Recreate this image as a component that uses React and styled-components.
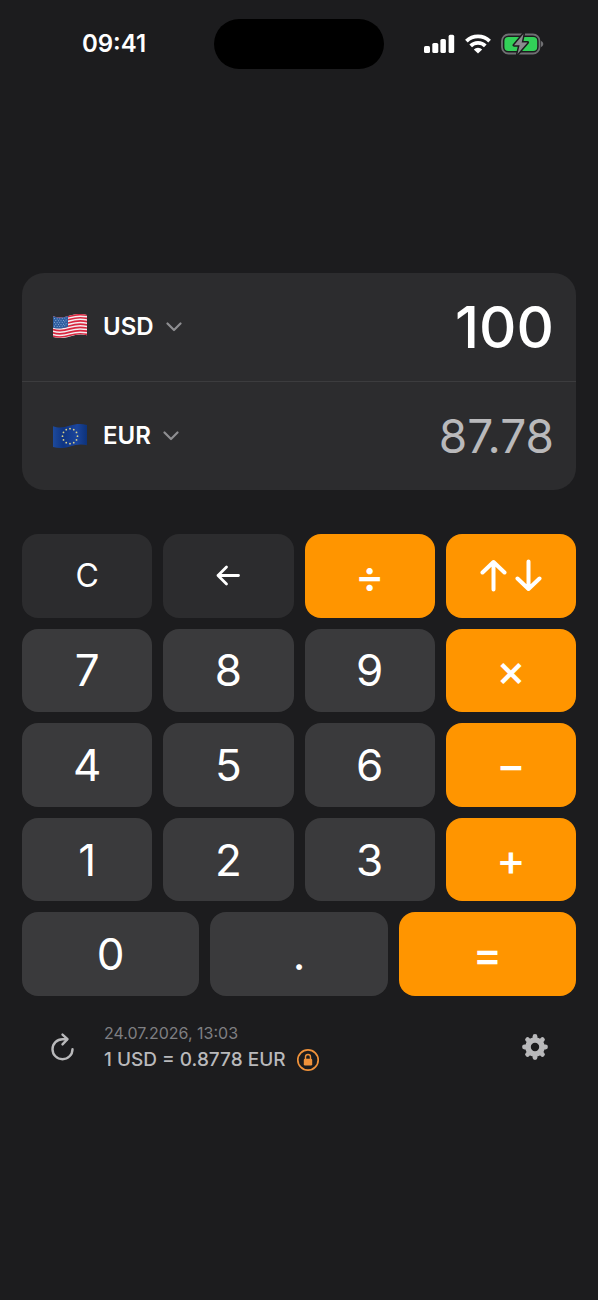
import React, { useState } from 'react';
import styled, { createGlobalStyle } from 'styled-components';

const fondo = '#1c1c1e';
const panel = '#2c2c2e';
const tecla = '#3a3a3c';
const naranja = '#ff9500';

const GlobalStyle = createGlobalStyle`
    * {
        box-sizing: border-box;
    }
    body {
        margin: 0;
        background: ${fondo};
        color: #fff;
        font-family: Inter, "Liberation Sans", sans-serif;
    }
    button, input, select {
        margin: 0;
        padding: 0;
        border: 0;
        background: none;
        color: inherit;
        font: inherit;
    }
    button {
        cursor: pointer;
    }
`

const Screen = styled.div`
    min-height: 100vh;
    background: ${fondo};
`

const StatusBar = styled.header`
    display: grid;
    grid-template-columns: 1fr 170px 1fr;
    align-items: center;
    height: 88px;
`

const Clock = styled.time`
    justify-self: center;
    padding-left: 14px;
    font-size: 24px;
    line-height: 28px;
    font-weight: 600;
`

const Island = styled.div`
    height: 50px;
    border-radius: 25px;
    background: #000;
`

const StatusIcons = styled.div`
    display: flex;
    align-items: center;
    justify-self: center;
    gap: 10px;
    padding-right: 14px;
`

const Main = styled.main`
    padding: 185px 22px 0;
`

const Card = styled.section`
    border-radius: 22px;
    background: ${panel};
`

const CurrencyRow = styled.div`
    display: flex;
    align-items: center;
    justify-content: space-between;
    height: 108px;
    padding: 0 22px 0 30px;

    & + & {
        height: 109px;
        border-top: 1px solid #3c3c3e;
    }
`

const Picker = styled.label`
    display: flex;
    align-items: center;
`

const CurrencySelect = styled.select`
    appearance: none;
    field-sizing: content;
    margin-left: 15px;
    padding-right: 30px;
    font-size: 24px;
    line-height: 32px;
    font-weight: 600;
    cursor: pointer;
    outline: none;
`

const ChevronIcon = styled.svg`
    margin-left: -18px;
    pointer-events: none;
`

const AmountInput = styled.input`
    flex: 1;
    min-width: 0;
    text-align: right;
    font-size: 58px;
    line-height: 70px;
    font-weight: 500;
    outline: none;
`

const Result = styled.output`
    font-size: 46px;
    line-height: 56px;
    font-weight: 400;
    color: #b9b9bb;
`

const Keypad = styled.div`
    display: grid;
    grid-template-columns: repeat(12, 1fr);
    grid-auto-rows: 1fr;
    gap: 11px;
    height: 462px;
    margin-top: 44px;
`

const Key = styled.button`
    display: flex;
    align-items: center;
    justify-content: center;
    grid-column: span ${({ $span }) => $span || 3};
    border-radius: 16px;
    background: ${tecla};
    font-size: 44px;
    line-height: 52px;
    font-weight: 400;
`

const FunctionKey = styled(Key)`
    background: ${panel};
    font-size: 32px;
`

const OperatorKey = styled(Key)`
    background: ${naranja};
    font-weight: 500;
`

const Footer = styled.footer`
    display: flex;
    align-items: center;
    padding: 24px 28px 0 29px;
`

const IconButton = styled.button`
    display: flex;
`

const RateInfo = styled.div`
    flex: 1;
    margin-left: 29px;
`

const RateDate = styled.time`
    display: block;
    font-size: 16px;
    line-height: 26px;
    color: #7f7f82;
`

const RateLine = styled.div`
    display: flex;
    align-items: center;
    gap: 10px;
    font-size: 19px;
    line-height: 28px;
    font-weight: 500;
    color: #b9b9bb;
`

const SignalIcon = () => (
    <svg width="31" height="20" viewBox="0 0 31 20" fill="#fff" aria-hidden="true">
        <rect x="0" y="12" width="6" height="7" rx="1.6" />
        <rect x="8.3" y="9" width="6" height="10" rx="1.6" />
        <rect x="16.4" y="5" width="5.5" height="14" rx="1.6" />
        <rect x="24.6" y="0.8" width="5.6" height="18.2" rx="1.6" />
    </svg>
)

const WifiIcon = () => (
    <svg width="26" height="20" viewBox="0 0 26 20" aria-hidden="true">
        <g fill="none" stroke="#fff" strokeWidth="3.8">
            <path d="M1.4 7.2a16.6 16.6 0 0 1 23.2 0" />
            <path d="M5.7 11.8a10.4 10.4 0 0 1 14.6 0" />
        </g>
        <path d="M13 19.6l-4.2-4.200a5.900 5.900 0 0 1 8.400 0z" fill="#fff" />
    </svg>
)

const BatteryIcon = () => (
    <svg width="43" height="22" viewBox="0 0 43 22" aria-hidden="true">
        <rect x="1" y="1.5" width="37.5" height="19" rx="6.5" fill="none" stroke="#6f6f72" strokeWidth="1.8" />
        <path d="M40 8c3 .8 3 5.2 0 6z" fill="#6f6f72" />
        <rect x="3.4" y="4" width="32.8" height="14" rx="4" fill="#32d158" />
        <path d="M22.5 1L13 12.2h5.6L16.500 21l10-11.600h-5.800z" fill="#8b8b8f" stroke="#1c1c1e" strokeWidth="3" paintOrder="stroke" strokeLinejoin="round" />
    </svg>
)

const Chevron = () => (
    <ChevronIcon width="16" height="10" viewBox="0 0 16 10" fill="none" stroke="#8e8e91" strokeWidth="2.2" strokeLinecap="round" strokeLinejoin="round" aria-hidden="true">
        <path d="M1.5 1.5L8 8l6.500-6.500" />
    </ChevronIcon>
)

const stripes = [0, 1, 2, 3, 4, 5, 6]
const starRows = [0, 1, 2, 3, 4]

const UsFlag = () => (
    <svg width="36" height="26" viewBox="0 1 36 26" aria-hidden="true">
        <clipPath id="us-shape">
            <path d="M1 3.2C7 5.5 12 4.500 18 2.600S29 .4 35 2v20.300c-6-1.600-11-.6-17 1.100s-11 2.300-17 .5z" />
        </clipPath>
        <g clipPath="url(#us-shape)">
            <rect width="36" height="26" fill="#f3eef0" />
            <g fill="none" stroke="#d8273f" strokeWidth="1.7">
                {stripes.map((i) => (
                    <path key={i} d={`M0 ${3.5 + i * 3.2}c7 2.5 12 1.5 18-.4s11-2.2 18-.7`} />
                ))}
            </g>
            <path d="M0 2.5c6 2.6 11 2 16-.1v11.400c-5 1.800-10 2.600-16 .6z" fill="#2d5d9f" />
            <g fill="none" stroke="#a9c3e6" strokeWidth="0.8" strokeDasharray="0.9 1.7">
                {starRows.map((i) => (
                    <path key={i} d={`M${i % 2 ? 3.3 : 2} ${5.5 + i * 1.9}c5 .9 9 .3 13-1.2`} />
                ))}
            </g>
        </g>
    </svg>
)

const EuFlag = () => (
    <svg width="36" height="26" viewBox="0 0 36 26" aria-hidden="true">
        <defs>
            <linearGradient id="eu-blue">
                <stop offset="0" stopColor="#1d4a9c" />
                <stop offset="0.3" stopColor="#0f3583" />
                <stop offset="0.7" stopColor="#1b459c" />
                <stop offset="1" stopColor="#0d3279" />
            </linearGradient>
        </defs>
        <path d="M1 3.2C7 5.5 12 4.500 18 2.600S29 .4 35 2v20.300c-6-1.600-11-.6-17 1.100s-11 2.300-17 .5z" fill="url(#eu-blue)" />
        <g fill="#d8cf8a">
            {Array.from({ length: 12 }, (_, i) => (
                <circle key={i} cx={18 + 7.5 * Math.sin(i * Math.PI / 6)} cy={13.2 - 7.5 * Math.cos(i * Math.PI / 6)} r="0.9" />
            ))}
        </g>
    </svg>
)

const BackIcon = () => (
    <svg width="26" height="22" viewBox="0 0 26 22" fill="none" stroke="#fff" strokeWidth="2.8" strokeLinecap="round" strokeLinejoin="round" aria-hidden="true">
        <path d="M23.5 10.500H3M11.500 2L3 10.500l8.500 8.500" />
    </svg>
)

const SwapIcon = () => (
    <svg width="62" height="34" viewBox="0 0 62 34" fill="none" stroke="#fff" strokeWidth="4" strokeLinecap="round" strokeLinejoin="round" aria-hidden="true">
        <path d="M13.5 30.500V3M2.500 13.500L13.500 3l11 10.500" />
        <path d="M48.5 2.500V30M37.500 19.500l11 10.500 11-10.500" />
    </svg>
)

const RefreshIcon = () => (
    <svg width="24" height="30" viewBox="0 0 24 30" fill="none" stroke="#b9b9bb" strokeWidth="2.4" strokeLinecap="round" strokeLinejoin="round" aria-hidden="true">
        <path d="M21.5 17.200A10 10 0 1 1 11.500 7.200h4.500" />
        <path d="M11.5 2.600L16.500 7.200l-5 5.200" />
    </svg>
)

const LockIcon = () => (
    <svg width="24" height="24" viewBox="0 0 24 24" aria-hidden="true">
        <circle cx="12" cy="12" r="10.2" fill="none" stroke="#f0923a" strokeWidth="1.7" />
        <rect x="7.8" y="10.8" width="8.4" height="6.7" rx="1.2" fill="#f0923a" />
        <path d="M9.5 11V9a2.500 2.500 0 0 1 5 0v2" fill="none" stroke="#f0923a" strokeWidth="1.4" />
    </svg>
)

const GearIcon = () => (
    <svg width="26" height="26" viewBox="-13 -13 26 26" fill="none" stroke="#b9b9bb" aria-hidden="true">
        <circle r="7" strokeWidth="5.6" />
        {[0, 45, 90, 135, 180, 225, 270, 315].map((a) => (
            <path key={a} d="M0-9v-1.500" strokeWidth="4.8" strokeLinecap="round" transform={`rotate(${a})`} />
        ))}
    </svg>
)

const rates = { USD: 1, EUR: 0.8778 }
const flags = { USD: UsFlag, EUR: EuFlag }

const CurrencyPicker = ({ label, value, onChange }) => {
    const Flag = flags[value]
    return (
        <Picker>
            <Flag />
            <CurrencySelect aria-label={label} value={value} onChange={(e) => onChange(e.target.value)}>
                <option>USD</option>
                <option>EUR</option>
            </CurrencySelect>
            <Chevron />
        </Picker>
    )
}

const operations = {
    '÷': (a, b) => a / b,
    '×': (a, b) => a * b,
    '−': (a, b) => a - b,
    '+': (a, b) => a + b,
}

const App = () => {
    const [amount, setAmount] = useState('100')
    const [pending, setPending] = useState(null)
    const [fresh, setFresh] = useState(true)
    const [from, setFrom] = useState('USD')
    const [to, setTo] = useState('EUR')

    const converted = (Number(amount) * rates[to] / rates[from]).toFixed(2)
    const rate = Number((rates[to] / rates[from]).toFixed(4))

    const type = (char) => {
        setAmount(fresh ? char : amount + char)
        setFresh(false)
    }

    const calculate = (next) => {
        const value = pending ? operations[pending.op](pending.value, Number(amount)) : Number(amount)
        setAmount(String(value))
        setPending(next ? { op: next, value } : null)
        setFresh(true)
    }

    const swap = () => {
        setFrom(to)
        setTo(from)
    }

    const digit = (n, span) => <Key type="button" $span={span} onClick={() => type(n)}>{n}</Key>
    const operator = (op) => <OperatorKey type="button" onClick={() => calculate(op)}>{op}</OperatorKey>

    return (
        <Screen>
            <GlobalStyle />
            <StatusBar>
                <Clock>09:41</Clock>
                <Island />
                <StatusIcons>
                    <SignalIcon />
                    <WifiIcon />
                    <BatteryIcon />
                </StatusIcons>
            </StatusBar>
            <Main>
                <Card>
                    <CurrencyRow>
                        <CurrencyPicker label="From" value={from} onChange={setFrom} />
                        <AmountInput aria-label="Amount" inputMode="decimal" value={amount} onChange={(e) => setAmount(e.target.value)} />
                    </CurrencyRow>
                    <CurrencyRow>
                        <CurrencyPicker label="To" value={to} onChange={setTo} />
                        <Result>{converted}</Result>
                    </CurrencyRow>
                </Card>
                <Keypad>
                    <FunctionKey type="button" onClick={() => setAmount('0')}>C</FunctionKey>
                    <FunctionKey type="button" aria-label="Delete" onClick={() => setAmount(amount.slice(0, -1) || '0')}>
                        <BackIcon />
                    </FunctionKey>
                    {operator('÷')}
                    <OperatorKey type="button" aria-label="Swap" onClick={swap}>
                        <SwapIcon />
                    </OperatorKey>
                    {digit('7')}
                    {digit('8')}
                    {digit('9')}
                    {operator('×')}
                    {digit('4')}
                    {digit('5')}
                    {digit('6')}
                    {operator('−')}
                    {digit('1')}
                    {digit('2')}
                    {digit('3')}
                    {operator('+')}
                    {digit('0', 4)}
                    {digit('.', 4)}
                    <OperatorKey type="button" $span={4} onClick={() => calculate(null)}>=</OperatorKey>
                </Keypad>
                <Footer>
                    <IconButton type="button" aria-label="Refresh">
                        <RefreshIcon />
                    </IconButton>
                    <RateInfo>
                        <RateDate>24.07.2026, 13:03</RateDate>
                        <RateLine>
                            1 {from} = {rate} {to}
                            <LockIcon />
                        </RateLine>
                    </RateInfo>
                    <IconButton type="button" aria-label="Settings">
                        <GearIcon />
                    </IconButton>
                </Footer>
            </Main>
        </Screen>
    )
}

export default App
